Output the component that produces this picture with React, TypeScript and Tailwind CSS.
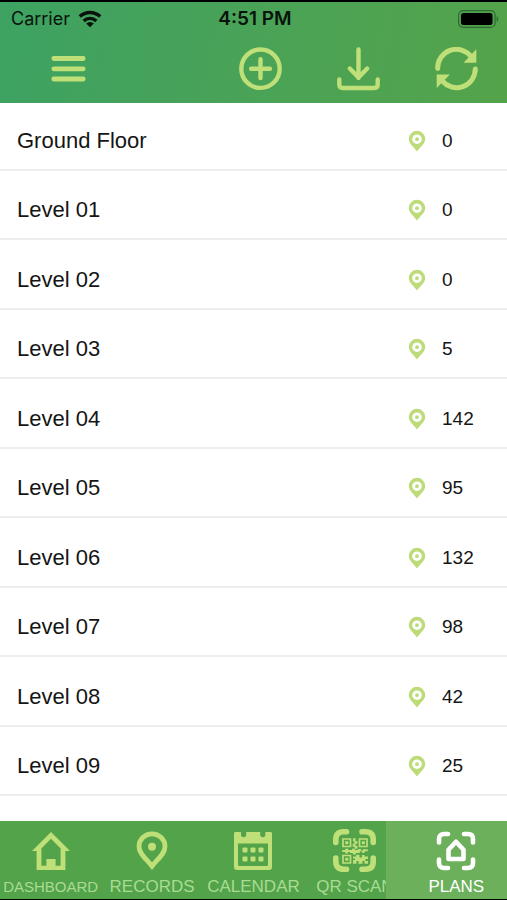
import { useState } from "react";
import type { ReactNode } from "react";

const FLOORS = [
  { name: "Ground Floor", pins: 0 },
  { name: "Level 01", pins: 0 },
  { name: "Level 02", pins: 0 },
  { name: "Level 03", pins: 5 },
  { name: "Level 04", pins: 142 },
  { name: "Level 05", pins: 95 },
  { name: "Level 06", pins: 132 },
  { name: "Level 07", pins: 98 },
  { name: "Level 08", pins: 42 },
  { name: "Level 09", pins: 25 },
];

function WifiIcon() {
  return (
    <svg viewBox="0 0 24 18" className="h-[18px] w-6" aria-hidden="true" fill="none" stroke="#07130b" strokeWidth="3.4">
      <path d="M1.800 6.600a14.800 14.800 0 0 1 20.400 0" />
      <path d="M5.700 10.900a9.200 9.200 0 0 1 12.600 0" />
      <path d="M12 17.300l-3.800-3.700a5.500 5.500 0 0 1 7.600 0z" fill="#07130b" stroke="none" />
    </svg>
  );
}

function BatteryIcon() {
  return (
    <svg viewBox="0 0 41 18" className="h-[18px] w-[41px]" aria-hidden="true">
      <rect x="0.6" y="0.6" width="36.5" height="16.8" rx="4.5" fill="none" stroke="#2d6a35" strokeWidth="1.2" />
      <rect x="3" y="3" width="31.5" height="12" rx="2.5" fill="#000" />
      <path d="M38.7 6.2c2 .8 2 4.8 0 5.6z" fill="#2d6a35" />
    </svg>
  );
}

function MenuIcon() {
  return (
    <svg viewBox="0 0 44 44" className="size-11" aria-hidden="true" stroke="currentColor" strokeWidth="4.8" strokeLinecap="round">
      <path d="M7.8 11.500h29.400M7.800 21.800h29.400M7.800 32h29.400" />
    </svg>
  );
}

function PlusIcon() {
  return (
    <svg viewBox="0 0 44 44" className="size-11" aria-hidden="true" fill="none" stroke="currentColor" strokeWidth="4.4" strokeLinecap="round">
      <circle cx="21.500" cy="21.700" r="19.200" />
      <path d="M21.500 12.300v18.800M12.100 21.700h18.800" />
    </svg>
  );
}

function DownloadIcon() {
  return (
    <svg viewBox="0 0 44 44" className="size-11" aria-hidden="true" fill="none" stroke="currentColor" strokeWidth="4.4" strokeLinecap="round" strokeLinejoin="round">
      <path d="M21.500 2.500v28.500M12.800 21.500l8.700 9 8.700-9" />
      <path d="M2.300 32.500v5c0 2.200 1.200 3.500 3.500 3.500h31.400c2.300 0 3.500-1.300 3.500-3.500v-5" />
    </svg>
  );
}

function RefreshIcon() {
  return (
    <svg viewBox="0 0 44 44" className="size-11" aria-hidden="true" fill="none" stroke="currentColor" strokeWidth="5" strokeLinecap="round">
      <path d="M2.700 21.400A18.600 18.600 0 0 1 36 9.500" />
      <path d="M40.300 22A18.600 18.600 0 0 1 7 33.500" />
      <path d="M41.300 2.300V15.800H28.600z" fill="currentColor" stroke="none" />
      <path d="M1.700 41V27.400h13.200z" fill="currentColor" stroke="none" />
    </svg>
  );
}

function HomeIcon() {
  return (
    <svg viewBox="0 0 44 44" className="size-11" aria-hidden="true" fill="currentColor">
      <path fillRule="evenodd" d="M22 3L41 22h-4.600V41H7.600V22H3zM22 9.800L12.400 19.400V36.800h5V30h9.200v6.800h5V19.400z" />
    </svg>
  );
}

function PinIcon() {
  return (
    <svg viewBox="0 0 44 44" className="size-11" aria-hidden="true">
      <path
        d="M22 37.200C16 29.600 9 24.600 9 17.400a13 12.600 0 0 1 26 0c0 7.200-7 12.200-13 19.800z"
        fill="none"
        stroke="currentColor"
        strokeWidth="4.8"
      />
      <circle cx="22" cy="17.800" r="4" fill="currentColor" />
    </svg>
  );
}

function CalendarIcon() {
  return (
    <svg viewBox="0 0 44 44" className="size-11" aria-hidden="true" fill="currentColor">
      <path
        fillRule="evenodd"
        d="M4.600 3h5.400v2.600a2.600 2.600 0 0 0 5.200 0V3h14v2.600a2.600 2.600 0 0 0 5.200 0V3h5c1 0 1.600.6 1.600 1.600V38c0 2-1 3-3 3H6c-2 0-3-1-3-3V4.600c0-1 .6-1.600 1.600-1.600zM7 14.500v21c0 1.200.5 1.600 1.600 1.600h26.800c1.100 0 1.600-.4 1.600-1.600v-21z"
      />
      {[18.5, 27.5].map(y =>
        [11.500, 19.500, 27.500].map(x => <rect key={`${x}-${y}`} x={x} y={y} width="5" height="5" rx="1" />)
      )}
    </svg>
  );
}

function QrIcon() {
  return (
    <svg viewBox="0 0 44 44" className="size-11" aria-hidden="true">
      <g fill="none" stroke="currentColor" strokeWidth="5.600" strokeLinecap="round">
        <path d="M2.800 13.500V10.500c0-5 2.500-7.700 7.700-7.700h3M29 2.800h3.500c5.200 0 7.700 2.700 7.700 7.700v3M40.200 29v3.500c0 5-2.500 7.700-7.700 7.700H29M13.500 40.200h-3c-5.200 0-7.700-2.700-7.700-7.700V29" />
      </g>
      <g fill="none" stroke="currentColor" strokeWidth="1.700">
        <path d="M10 10h7.500v7.500h-7.500zM26.500 10h7.500v7.500h-7.500zM10 26.500h7.500v7.500h-7.500z" />
      </g>
      <g fill="currentColor">
        <path d="M12.300 12.300h3v3h-3zM28.800 12.300h3v3h-3zM12.300 28.800h3v3h-3z" />
        <path d="M20 9.200h2.500v3h2v2.500h-2v2h2v3h-2.800v-2h-2v-3h1.500v-2.500H20zM9.200 21h3v-1.300h3V21h3.800v-1.300h3V21h3v-1h3v1.500h2v-1.300h4.800v2h-3v1.500h-3v-1.500h-2V24h-4v1.500h-3V24h-3v-1h-2v1.500h-2.500V23H9.200z" />
        <path d="M20 27.500h3.200v-1.700h3.300v2.700h2.500V26h2.500v1.500h3.500v2.500h-2.500v2h2.500v2.800h-3.500V32h-2v2.800h-4V32h-2v2.800h-3.500V31h2v-1.500h-2z" />
      </g>
    </svg>
  );
}

function PlansIcon() {
  return (
    <svg viewBox="0 0 44 44" className="size-11" aria-hidden="true" fill="none" stroke="currentColor" strokeWidth="4.600">
      <path
        strokeLinecap="round"
        d="M5 13.500V10c0-3.200 1.800-5 5-5h4M30 5h4c3.200 0 5 1.800 5 5v3.500M39 30.500V34c0 3.200-1.800 5-5 5h-4M14 39H10c-3.200 0-5-1.800-5-5v-3.500"
      />
      <path strokeLinejoin="round" d="M14.500 20.800L22 12.800l7.500 8v9.200h-15z" />
    </svg>
  );
}

function MarkerIcon() {
  return (
    <svg viewBox="0 0 18 22" className="h-[22px] w-[18px] text-[#bddb78]" aria-hidden="true" fill="currentColor">
      <path fillRule="evenodd" d="M9 .8a8.200 8.200 0 0 1 8.200 8.200c0 4.600-4.700 7.700-8.200 12.400C5.500 16.700.8 13.600.8 9A8.200 8.200 0 0 1 9 .8zM9 4.400a4.800 4.800 0 1 0 0 9.600 4.800 4.800 0 0 0 0-9.600z" />
      <circle cx="9" cy="9.200" r="1.900" />
    </svg>
  );
}

const ACTIONS = [
  { label: "Add plan", icon: <PlusIcon /> },
  { label: "Download", icon: <DownloadIcon /> },
  { label: "Refresh",  icon: <RefreshIcon /> },
];

const TABS: { label: string; icon: ReactNode; size: string }[] = [
  { label: "DASHBOARD", icon: <HomeIcon />,     size: "text-[15px]" },
  { label: "RECORDS",   icon: <PinIcon />,      size: "text-[17px]" },
  { label: "CALENDAR",  icon: <CalendarIcon />, size: "text-[17px]" },
  { label: "QR SCAN",   icon: <QrIcon />,       size: "text-[17px]" },
  { label: "PLANS",     icon: <PlansIcon />,    size: "text-[17px]" },
];

export default function App() {
  const [tab, setTab] = useState("PLANS");

  return (
    <div className="flex min-h-screen flex-col bg-white font-['Liberation_Sans',Arial,sans-serif] text-[#151515]">
      <header className="border-t-2 border-black bg-linear-100 from-[#3da262] to-[#54a34a]">
        {/* status bar */}
        <div className="grid grid-cols-3 items-center pt-[5px] pr-2 pl-[11px] font-['Inter',sans-serif] text-[#07130b]">
          <div className="flex items-center gap-2">
            <span className="text-lg leading-6">Carrier</span>
            <WifiIcon />
          </div>
          <span className="text-center text-[19px] leading-6 font-semibold">4:51 PM</span>
          <div className="flex justify-end">
            <BatteryIcon />
          </div>
        </div>

        {/* toolbar */}
        <div className="flex items-center justify-between pt-4 pr-7 pb-3 pl-[46px] text-[#bfe078]">
          <button type="button" aria-label="Menu">
            <MenuIcon />
          </button>
          <div className="flex gap-[54px]">
            {ACTIONS.map(a => (
              <button key={a.label} type="button" aria-label={a.label}>
                {a.icon}
              </button>
            ))}
          </div>
        </div>
      </header>

      <main className="flex flex-1 flex-col pb-[25px]">
        <ul className="flex flex-1 flex-col">
          {FLOORS.map(floor => (
            <li key={floor.name} className="flex min-h-16 flex-1 border-b-2 border-[#ededed] first:flex-none first:basis-[68px]">
              <button type="button" className="flex w-full items-end pr-[17px] pb-[14px] pl-[17px] text-left">
                <span className="flex-1 text-[22px] leading-7">{floor.name}</span>
                <span className="flex h-7 items-center">
                  <MarkerIcon />
                </span>
                <span className="ml-4 w-12 text-[19px] leading-7">{floor.pins}</span>
              </button>
            </li>
          ))}
        </ul>
      </main>

      <nav className="grid grid-cols-5 border-b border-black bg-[#53a34a]">
        {TABS.map(t => (
          <button
            key={t.label}
            type="button"
            onClick={() => setTab(t.label)}
            aria-current={tab === t.label ? "page" : undefined}
            className={`flex flex-col items-center pt-2 pb-px ${
              tab === t.label ? "-ml-5 bg-[#6cb05c] pl-5 text-white" : "text-[#bfe078]"
            }`}
          >
            {t.icon}
            <span className={`mt-[3px] leading-[22px] whitespace-nowrap ${t.size} ${tab === t.label ? "text-white" : "text-[#a9dc92]"}`}>
              {t.label}
            </span>
          </button>
        ))}
      </nav>
    </div>
  );
}
